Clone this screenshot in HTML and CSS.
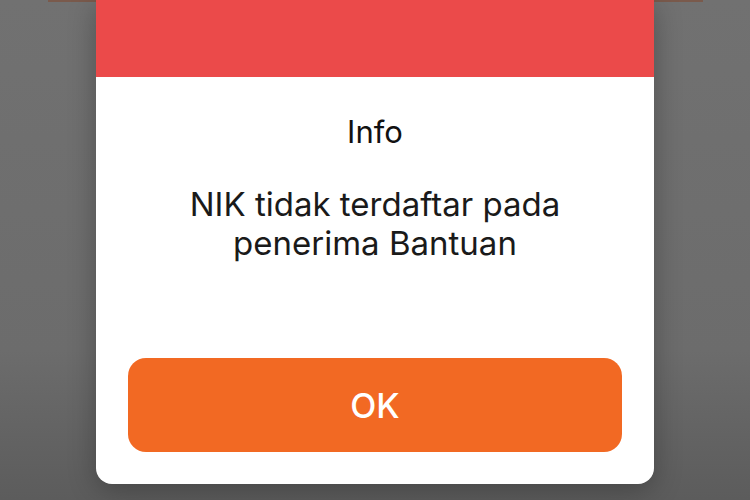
FILE: index.html
```html
<!DOCTYPE html>
<html lang="id">
<head>
<meta charset="utf-8">
<title>Info</title>
<link rel="stylesheet" href="styles.css">
</head>
<body>
<div class="screen">
  <div class="dialog">
    <div class="dialog-header"></div>
    <div class="dialog-body">
      <h2 class="dialog-title">Info</h2>
      <p class="dialog-message">NIK tidak terdaftar pada<br>penerima Bantuan</p>
      <button class="dialog-button" type="button">OK</button>
    </div>
  </div>
</div>
</body>
</html>
```
FILE: styles.css
```css
html, body {
  margin: 0;
  padding: 0;
  width: 750px;
  height: 500px;
  overflow: hidden;
}

body {
  background: linear-gradient(180deg, #717171 0%, #6c6c6c 70%, #5c5c5c 100%);
  font-family: Inter, "Noto Sans", sans-serif;
}

.screen {
  position: relative;
  height: 500px;
  display: flex;
  justify-content: center;
  align-items: flex-start;
}

/* edge of the sheet sitting behind the dialog */
.screen::before {
  content: "";
  position: absolute;
  top: 0;
  left: 48px;
  right: 47px;
  height: 2px;
  background: #7a5a4c;
}

.dialog {
  position: relative;
  width: 558px;
  background: #ffffff;
  border-radius: 0 0 16px 16px;
  box-shadow: 0 6px 28px rgba(0, 0, 0, 0.28);
  overflow: hidden;
}

.dialog-header {
  height: 77px;
  background: #eb4a4a;
}

.dialog-body {
  display: flex;
  flex-direction: column;
  align-items: center;
  padding: 36px 32px 32px;
}

.dialog-title {
  margin: 0;
  font-size: 31px;
  font-weight: 400;
  line-height: 38px;
  color: #111111;
}

.dialog-message {
  margin: 34px 0 0;
  font-size: 33px;
  font-weight: 400;
  line-height: 39px;
  text-align: center;
  color: #1a1a1a;
}

.dialog-button {
  margin-top: 95px;
  width: 100%;
  height: 94px;
  border: none;
  border-radius: 18px;
  background: #f26923;
  color: #ffffff;
  font-family: inherit;
  font-size: 34px;
  font-weight: 500;
}
```
